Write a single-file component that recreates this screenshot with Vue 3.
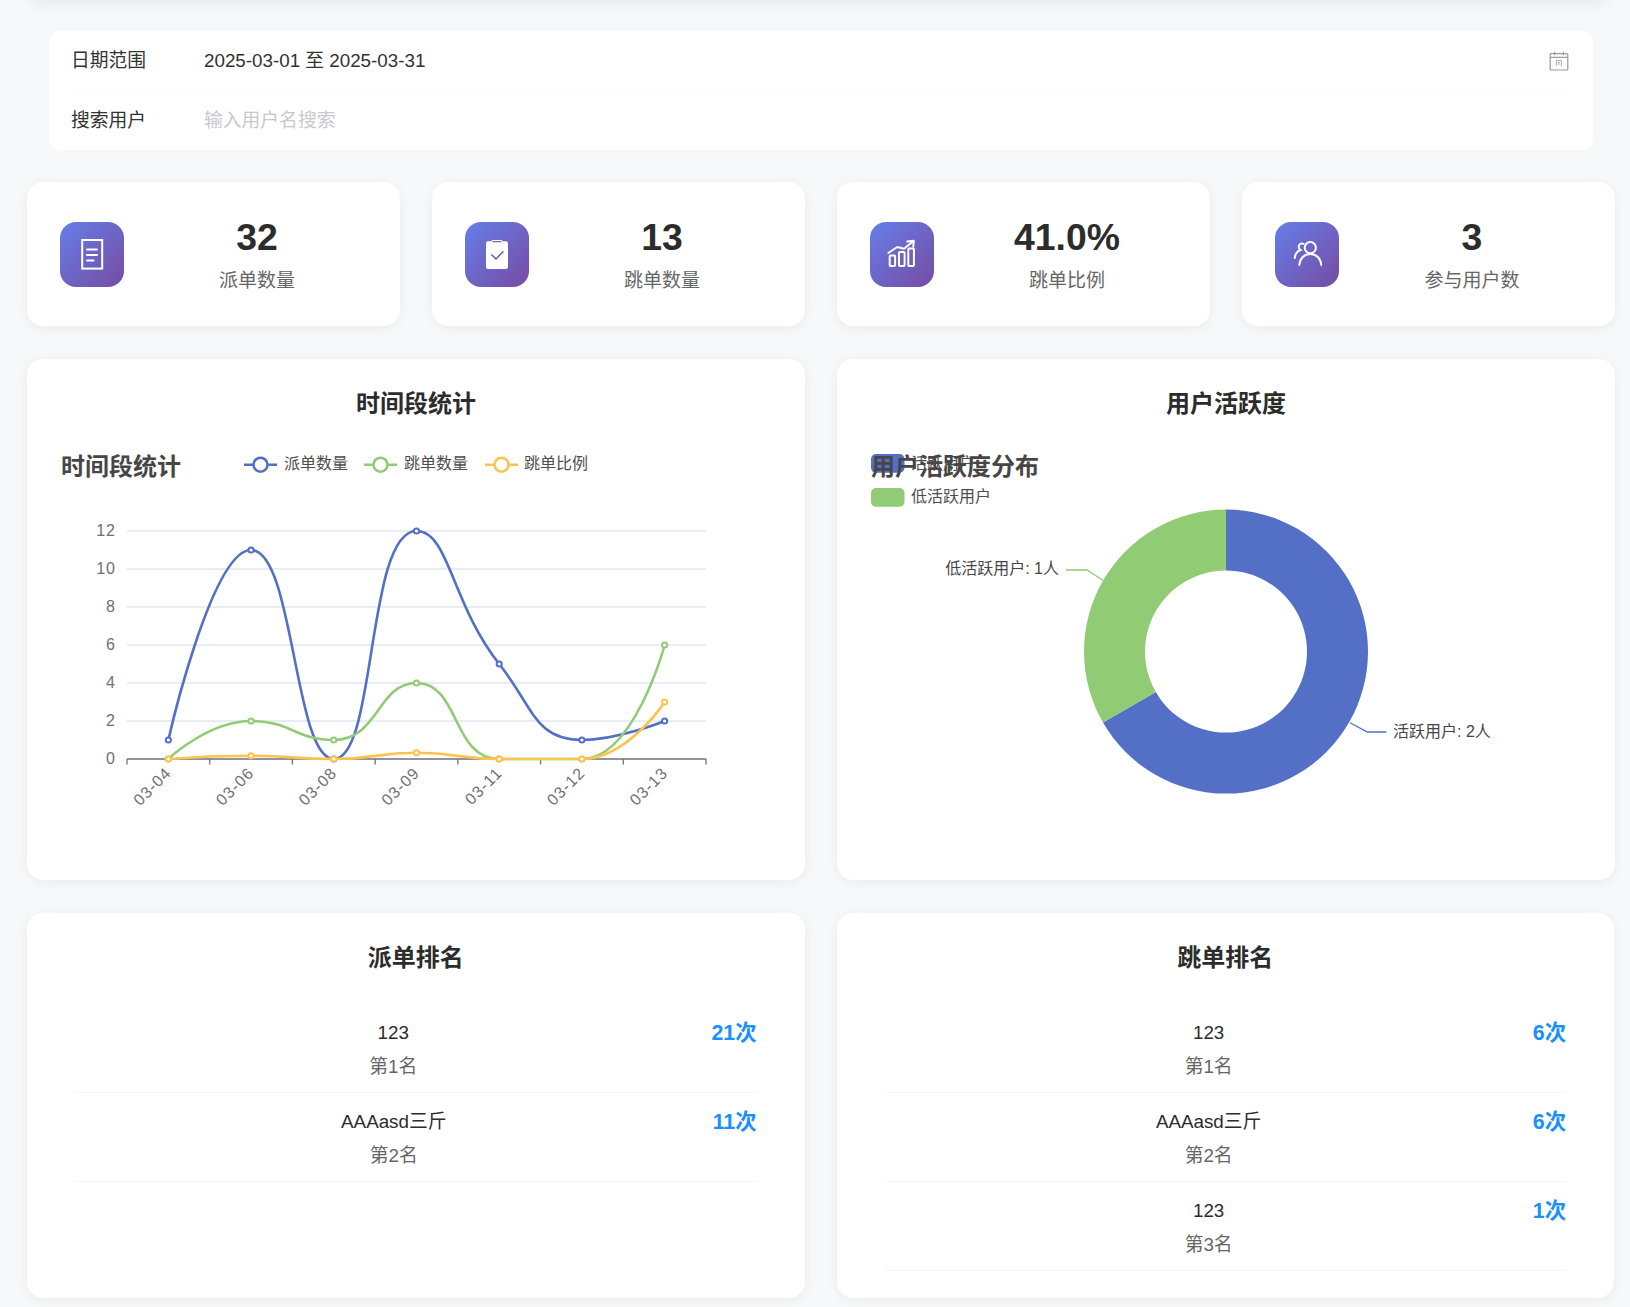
<script setup>
import { computed } from 'vue'

const stats = [
  { key: 'doc', value: '32', label: '派单数量' },
  { key: 'clip', value: '13', label: '跳单数量' },
  { key: 'trend', value: '41.0%', label: '跳单比例' },
  { key: 'users', value: '3', label: '参与用户数' },
]

const dispatchRank = [
  { name: '123', rank: '第1名', count: '21次' },
  { name: 'AAAasd三斤', rank: '第2名', count: '11次' },
]
const jumpRank = [
  { name: '123', rank: '第1名', count: '6次' },
  { name: 'AAAasd三斤', rank: '第2名', count: '6次' },
  { name: '123', rank: '第3名', count: '1次' },
]
const rankCards = [
  { title: '派单排名', rows: dispatchRank },
  { title: '跳单排名', rows: jumpRank },
]

// 折线图的绘图区域（svg 内坐标）
const grid = { left: 68, right: 647, top: 87, bottom: 315 }
const days = ['03-04', '03-06', '03-08', '03-09', '03-11', '03-12', '03-13']
const band = (grid.right - grid.left) / days.length
const unit = (grid.bottom - grid.top) / 12
const xAt = (i) => grid.left + band * (i + 0.5)
const yAt = (v) => grid.bottom - v * unit
const yTicks = [0, 2, 4, 6, 8, 10, 12]
const xTicks = Array.from({ length: days.length + 1 }, (_, i) => grid.left + band * i)

const series = [
  { name: '派单数量', color: '#5470c6', data: [1, 11, 0, 12, 5, 1, 2], lx: 185, tx: 225 },
  { name: '跳单数量', color: '#91cc75', data: [0, 2, 1, 4, 0, 0, 6], lx: 305, tx: 345 },
  { name: '跳单比例', color: '#fcc34f', data: [0, 0.17, 0, 0.33, 0, 0, 3], lx: 426, tx: 465 },
]

const clamp = (v, a, b) => Math.max(Math.min(a, b), Math.min(v, Math.max(a, b)))

// 和 echarts smooth: true 一样的贝塞尔控制点算法
function smoothPath(pts, smooth = 0.5) {
  let d = `M${pts[0][0]} ${pts[0][1]}`
  let cx0 = pts[0][0]
  let cy0 = pts[0][1]
  for (let i = 1; i < pts.length; i++) {
    const [x, y] = pts[i]
    const [px, py] = pts[i - 1]
    const [nx, ny] = pts[i + 1] || pts[i]
    const lenPrev = Math.hypot(x - px, y - py)
    const lenNext = Math.hypot(nx - x, ny - y)
    let c2x = x
    let c2y = y
    let c1x = x
    let c1y = y
    if (lenNext > 0 && lenPrev > 0) {
      const ratio = lenNext / (lenNext + lenPrev)
      c1x = clamp(x + (nx - px) * smooth * ratio, x, nx)
      c1y = clamp(y + (ny - py) * smooth * ratio, y, ny)
      c2x = clamp(x - ((c1x - x) * lenPrev) / lenNext, px, x)
      c2y = clamp(y - ((c1y - y) * lenPrev) / lenNext, py, y)
      c1x = x + ((x - c2x) * lenNext) / lenPrev
      c1y = y + ((y - c2y) * lenNext) / lenPrev
    }
    d += `C${cx0} ${cy0} ${c2x} ${c2y} ${x} ${y}`
    cx0 = c1x
    cy0 = c1y
  }
  return d
}

const lines = computed(() =>
  series.map((s) => {
    const points = s.data.map((v, i) => [xAt(i), yAt(v)])
    return { ...s, points, path: smoothPath(points) }
  })
)

// 环形图
const donut = { cx: 357, cy: 207.6, r: 142, r0: 81 }
function arc(from, to) {
  const pt = (rad, deg) => {
    const a = (deg * Math.PI) / 180
    return `${donut.cx + rad * Math.sin(a)} ${donut.cy - rad * Math.cos(a)}`
  }
  const large = to - from > 180 ? 1 : 0
  return `M${pt(donut.r, from)}A${donut.r} ${donut.r} 0 ${large} 1 ${pt(donut.r, to)}L${pt(donut.r0, to)}A${donut.r0} ${donut.r0} 0 ${large} 0 ${pt(donut.r0, from)}Z`
}
const slices = [
  { color: '#5470c6', d: arc(0, 240) },
  { color: '#91cc75', d: arc(240, 359.99) },
]
</script>

<template>
  <div class="page">
    <div class="top-shadow"></div>

    <div class="filter">
      <div class="filter-row">
        <span class="filter-label">日期范围</span>
        <span class="filter-value">2025-03-01 至 2025-03-31</span>
        <svg class="calendar" viewBox="0 0 20 20" fill="none" stroke="#9a9a9a" stroke-width="1.2">
          <rect x="1.2" y="2.6" width="17.6" height="16.4" rx="1" />
          <path d="M1.2 6.4h17.6M5.6 .8v3.4M14.4 .8v3.4" />
          <path d="M7.4 9.4h5v5.6M7.4 9.4v5.6M8.8 11.4h2.2M8.8 13h2.2" stroke-width=".8" />
        </svg>
      </div>
      <div class="filter-row">
        <span class="filter-label">搜索用户</span>
        <span class="filter-placeholder">输入用户名搜索</span>
      </div>
    </div>

    <div class="stats">
      <div v-for="s in stats" :key="s.key" class="card stat-card">
        <div class="stat-icon">
          <svg v-if="s.key === 'doc'" viewBox="0 0 64 64" fill="none" stroke="#fff" stroke-width="2">
            <rect x="22.2" y="18" width="20" height="28.6" />
            <path d="M27 27.5h10M27 33h10M27 38.5h6.5" stroke-linecap="round" />
          </svg>
          <svg v-else-if="s.key === 'clip'" viewBox="0 0 64 64" fill="none">
            <path d="M28 18h8a1.5 1.5 0 0 1 1.5 1.2H41a2 2 0 0 1 2 2V45a2 2 0 0 1-2 2H23a2 2 0 0 1-2-2V21.200a2 2 0 0 1 2-2h3.500A1.500 1.500 0 0 1 28 18z" fill="#fff" />
            <path d="M28 19.600h8" stroke="#7a62b8" stroke-width="1.300" stroke-linecap="round" />
            <path d="M26.300 32.500l4.700 4.400 7.400-7.600" stroke="#6d5bb5" stroke-width="1.500" />
          </svg>
          <svg v-else-if="s.key === 'trend'" viewBox="0 0 64 64" fill="none" stroke="#fff" stroke-width="2">
            <rect x="19.700" y="33.500" width="5.400" height="10.500" rx=".8" />
            <rect x="29" y="30" width="5.600" height="14" rx=".8" />
            <rect x="38.300" y="26.500" width="5.600" height="17.500" rx=".8" />
            <path d="M18.300 31l9-6 6.700 1.700 9-7.300" stroke-linecap="round" stroke-linejoin="round" />
            <path d="M37.300 19.600l6.400-.8-.4 6" stroke-linecap="round" stroke-linejoin="round" />
          </svg>
          <svg v-else viewBox="0 0 64 64" fill="none" stroke="#fff" stroke-width="2" stroke-linecap="round">
            <circle cx="35.300" cy="25.700" r="5.600" />
            <path d="M24.300 43c.6-6.800 5-11 11-11s10.400 4.200 11 11" />
            <path d="M28.500 21.800c-2-1-4.800.2-4.800 3 0 1.400.7 2.500 1.800 3.200-3.500 1.200-5.300 4.300-5.800 8" />
          </svg>
        </div>
        <div class="stat-text">
          <div class="stat-value">{{ s.value }}</div>
          <div class="stat-label">{{ s.label }}</div>
        </div>
      </div>
    </div>

    <div class="charts">
      <div class="card chart-card">
        <h3 class="card-title">时间段统计</h3>
        <svg class="chart" viewBox="0 0 714 412">
          <text class="chart-title" x="2" y="31">时间段统计</text>
          <g v-for="s in lines" :key="s.name">
            <path :d="`M${s.lx} 20.700h33`" :stroke="s.color" stroke-width="2.600" />
            <circle :cx="s.lx + 16.500" cy="20.700" r="7" fill="#fff" :stroke="s.color" stroke-width="2.600" />
            <text class="legend-text" :x="s.tx" y="25">{{ s.name }}</text>
          </g>

          <path v-for="t in yTicks.slice(1)" :key="t" class="grid-line" :d="`M${grid.left} ${yAt(t)}H${grid.right}`" />
          <text v-for="t in yTicks" :key="'y' + t" class="axis-text" x="57" :y="yAt(t) + 4.500" text-anchor="end">{{ t }}</text>
          <path class="axis-line" :d="`M${grid.left} ${grid.bottom}H${grid.right}`" />
          <path v-for="x in xTicks" :key="x" class="axis-line" :d="`M${x} ${grid.bottom}v5.500`" />
          <text
            v-for="(d, i) in days"
            :key="d"
            class="axis-text"
            text-anchor="end"
            :x="xAt(i) + 4"
            :y="grid.bottom + 15"
            :transform="`rotate(-45 ${xAt(i) + 4} ${grid.bottom + 15})`"
          >{{ d }}</text>

          <g v-for="s in lines" :key="'l' + s.name">
            <path :d="s.path" fill="none" :stroke="s.color" stroke-width="2.600" />
            <circle v-for="(p, i) in s.points" :key="i" :cx="p[0]" :cy="p[1]" r="2.600" fill="#fff" :stroke="s.color" stroke-width="2" />
          </g>
        </svg>
      </div>

      <div class="card chart-card">
        <h3 class="card-title">用户活跃度</h3>
        <svg class="chart" viewBox="0 0 714 412">
          <rect x="2" y="10" width="33.500" height="18.700" rx="5" fill="#5470c6" />
          <text class="legend-text" x="42" y="25">活跃用户</text>
          <rect x="2" y="44" width="33.500" height="18.700" rx="5" fill="#91cc75" />
          <text class="legend-text" x="42" y="58">低活跃用户</text>
          <text class="chart-title" x="2" y="31">用户活跃度分布</text>

          <path v-for="s in slices" :key="s.color" :d="s.d" :fill="s.color" />
          <path d="M481 278.700l17.400 9.300h19" fill="none" stroke="#5470c6" stroke-width="1.300" />
          <path d="M234.700 136.700l-16.700-10.700h-21" fill="none" stroke="#91cc75" stroke-width="1.300" />
          <text class="pie-label" x="524" y="293">活跃用户: 2人</text>
          <text class="pie-label" x="190" y="130" text-anchor="end">低活跃用户: 1人</text>
        </svg>
      </div>
    </div>

    <div class="ranks">
      <div v-for="c in rankCards" :key="c.title" class="card rank-card">
        <h3 class="card-title">{{ c.title }}</h3>
        <div class="rank-list">
          <div v-for="r in c.rows" :key="r.rank" class="rank-row">
            <div class="rank-info">
              <div class="rank-name">{{ r.name }}</div>
              <div class="rank-place">{{ r.rank }}</div>
            </div>
            <div class="rank-count">{{ r.count }}</div>
          </div>
        </div>
      </div>
    </div>
  </div>
</template>

<style>
html,
body {
  margin: 0;
  background: #f7f8fa;
  overflow: hidden;
}
</style>

<style scoped>
.page {
  position: relative;
  box-sizing: border-box;
  min-height: 1307px;
  padding: 31px 16px 9px 27px;
  background: #f7f8fa;
  color: #333;
  font-family: "Liberation Sans", "Noto Sans CJK SC", sans-serif;
  font-size: 18.8px;
}
.top-shadow {
  position: absolute;
  top: -30px;
  left: 31px;
  right: 25px;
  height: 30px;
  box-shadow: 0 2px 16px rgba(0, 0, 0, 0.08);
}

/* 筛选 */
.filter {
  margin: 0 21px 32px 22px;
  padding: 0 23px 0 22px;
  background: #fff;
  border-radius: 11px;
}
.filter-row {
  display: flex;
  align-items: center;
  box-sizing: border-box;
  height: 59px;
  padding-bottom: 4px;
}
.filter-row + .filter-row {
  border-top: 1px solid #f8f8f8;
  height: 60px;
}
.filter-label {
  width: 133px;
  color: #333;
}
.filter-value {
  flex: 1;
  color: #323233;
}
.filter-placeholder {
  color: #c8c9cc;
}
.calendar {
  width: 20px;
  height: 20px;
  margin-right: 1px;
  margin-top: 5px;
}

/* 卡片 */
.card {
  box-sizing: border-box;
  background: #fff;
  border-radius: 16px;
  box-shadow: 0 2px 12px rgba(0, 0, 0, 0.06);
}
.card-title {
  margin: 0;
  font-size: 24px;
  line-height: 26px;
  font-weight: 700;
  text-align: center;
  color: #2c2c2c;
}

/* 统计 */
.stats {
  display: grid;
  grid-template-columns: repeat(4, 373px);
  column-gap: 32px;
  margin-bottom: 33px;
}
.stat-card {
  display: flex;
  align-items: center;
  height: 144px;
  padding: 0 31px 0 33px;
}
.stat-icon {
  flex: none;
  width: 64px;
  height: 65px;
  margin-right: 21px;
  border-radius: 16px;
  background: linear-gradient(135deg, #667eea 0%, #764ba2 100%);
}
.stat-icon svg {
  display: block;
  width: 64px;
  height: 64px;
}
.stat-text {
  flex: 1;
  padding-top: 2px;
  text-align: center;
}
.stat-value {
  font-size: 37.33px;
  line-height: 44px;
  font-weight: 700;
  color: #2c2c2c;
  margin-bottom: 8px;
}
.stat-label {
  font-size: 19px;
  line-height: 28px;
  color: #666;
}

/* 图表 */
.charts {
  display: grid;
  grid-template-columns: 1fr 1fr;
  gap: 32px;
  margin-bottom: 33px;
}
.chart-card {
  height: 521px;
  padding: 32px;
}
.chart {
  display: block;
  width: 714px;
  height: 412px;
  margin-top: 27px;
}
.chart-title {
  font-size: 24px;
  font-weight: 700;
  fill: #464646;
}
.legend-text {
  font-size: 16px;
  fill: #4d4d4d;
}
.pie-label {
  font-size: 16px;
  fill: #464646;
}
.axis-text {
  font-size: 16px;
  letter-spacing: 1px;
  fill: #6e7079;
}
.grid-line {
  stroke: #e0e6f1;
  stroke-width: 1.3;
}
.axis-line {
  stroke: #6e7079;
  stroke-width: 1.3;
}

/* 排名 */
.ranks {
  display: grid;
  grid-template-columns: 1fr 1fr;
  gap: 32px;
}
.rank-card {
  height: 385px;
  padding: 32px 32px 0;
}
.rank-list {
  margin-top: 33px;
  padding: 0 16px;
}
.rank-row {
  display: flex;
  align-items: flex-start;
  box-sizing: border-box;
  height: 89px;
  padding-top: 17px;
  border-bottom: 1px solid #f5f5f5;
}
.rank-info {
  flex: 1;
  text-align: center;
}
.rank-name {
  line-height: 24px;
  color: #2c2c2c;
}
.rank-place {
  margin-top: 10px;
  line-height: 24px;
  color: #666;
}
.rank-count {
  font-size: 21.33px;
  line-height: 24px;
  font-weight: 700;
  color: #1890ff;
}
</style>
